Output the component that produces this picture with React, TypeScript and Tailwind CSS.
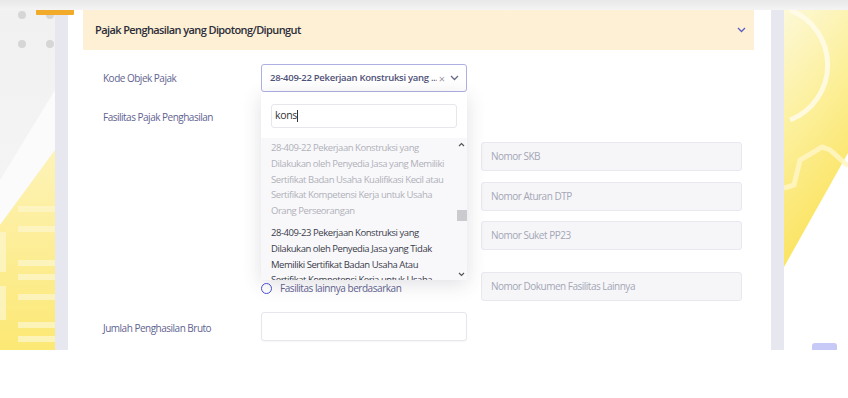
import React from "react";

const font = { fontFamily: '"Open Sans", "Noto Sans", sans-serif' };

function LeftBg() {
  return (
    <div className="w-[55px] shrink-0 h-full">
      <svg width="55" height="340" viewBox="0 0 55 340">
        <defs>
          <linearGradient id="lg1" x1="0" y1="0" x2="0" y2="1">
            <stop offset="0" stopColor="#f1f1f1" />
            <stop offset="1" stopColor="#f7f7f7" />
          </linearGradient>
          <linearGradient id="ly" x1="0" y1="0" x2="0" y2="1">
            <stop offset="0" stopColor="#fdf3b8" />
            <stop offset="1" stopColor="#fce874" />
          </linearGradient>
        </defs>
        <rect width="55" height="340" fill="url(#lg1)" />
        <polygon points="55,80 55,140 0,215 0,170" fill="#fbfbfb" />
        <polygon points="55,140 55,340 0,340 0,215" fill="url(#ly)" />
        <circle cx="22" cy="5" r="4" fill="#d6d6d6" />
        <circle cx="50" cy="5" r="4" fill="#d6d6d6" />
        <circle cx="22" cy="34" r="4" fill="#d6d6d6" />
        <circle cx="50" cy="34" r="4" fill="#d6d6d6" />
        <g fill="#fdf6c8" opacity="0.8">
          <rect x="18" y="196" width="37" height="6" />
          <rect x="18" y="216" width="37" height="6" />
          <rect x="18" y="250" width="37" height="6" />
          <rect x="18" y="264" width="37" height="6" />
          <rect x="18" y="284" width="37" height="6" />
          <rect x="18" y="312" width="37" height="6" />
          <rect x="18" y="326" width="37" height="6" />
          <rect x="0" y="222" width="6" height="40" />
          <rect x="0" y="276" width="6" height="34" />
        </g>
      </svg>
    </div>
  );
}

function RightBg() {
  return (
    <div className="w-[64px] shrink-0 h-full relative">
      <svg width="64" height="340" viewBox="0 0 64 340">
        <defs>
          <linearGradient id="ry" x1="0" y1="0" x2="0.3" y2="1">
            <stop offset="0" stopColor="#fdf8d8" />
            <stop offset="0.45" stopColor="#fcf09c" />
            <stop offset="1" stopColor="#fbe25a" />
          </linearGradient>
        </defs>
        <rect width="64" height="340" fill="#ffffff" />
        <polygon points="0,0 64,0 64,143 0,257" fill="url(#ry)" />
        <path d="M6,0 A59,59 0 0 1 6,110" stroke="#fffbea" strokeWidth="5" fill="none" opacity="0.85" />
        <path d="M0,178 L10,175 L16,150 L38,137 L46,140 L64,156" stroke="#fff6c4" strokeWidth="5" fill="none" opacity="0.85" />
      </svg>
      <div className="absolute left-[28px] top-[333px] w-[25px] h-[12px] rounded-[3px] bg-[#c7c9f7]" />
    </div>
  );
}

function Chevron({ className }: { className?: string }) {
  return (
    <svg width="9" height="6" viewBox="0 0 9 6" className={className}>
      <path d="M1 1 L4.5 4.5 L8 1" stroke="currentColor" strokeWidth="1.3" fill="none" />
    </svg>
  );
}

function Field({ placeholder }: { placeholder: string }) {
  return (
    <div className="h-[29px] rounded-[3px] border border-[#e8e8ee] bg-[#f6f6f9] flex items-center px-[9px] text-[10px] text-[#a4a6b5] tracking-[-0.5px] whitespace-nowrap">
      {placeholder}
    </div>
  );
}

function Dropdown() {
  return (
    <div className="absolute left-0 top-[28px] w-[206px] h-[188px] bg-white shadow-[0_4px_18px_rgba(60,60,90,0.16)] flex flex-col z-10">
      <div className="px-[10px] pt-[12px] pb-[10px]">
        <div className="h-[24px] rounded-[3px] border border-[#e6e6ec] flex items-center justify-start pl-[3px] text-[10.5px] text-[#333] bg-white tracking-[-0.3px]">
          <span>kons</span>
          <span className="inline-block w-px h-[12px] bg-[#333]" />
        </div>
      </div>
      <div className="flex-1 bg-[#f8f8fa] flex overflow-hidden">
        <div className="flex-1 pl-[10px] pr-[4px] pt-[2px] text-[9.5px] leading-[15.8px] tracking-[-0.45px]">
          <div className="text-[#b0b1b9] pb-[3px]">
            28-409-22 Pekerjaan Konstruksi yang Dilakukan oleh Penyedia Jasa yang Memiliki Sertifikat Badan Usaha Kualifikasi Kecil atau Sertifikat Kompetensi Kerja untuk Usaha Orang Perseorangan
          </div>
          <div className="text-[#3b3c4a] pt-[3px]">
            28-409-23 Pekerjaan Konstruksi yang Dilakukan oleh Penyedia Jasa yang Tidak Memiliki Sertifikat Badan Usaha Atau Sertifikat Kompetensi Kerja untuk Usaha
          </div>
        </div>
        <div className="w-[11px] shrink-0 flex flex-col items-center">
          <svg width="7" height="5" viewBox="0 0 7 5" className="mt-[4px]">
            <path d="M1 4 L3.5 1.5 L6 4" stroke="#555" strokeWidth="1.2" fill="none" />
          </svg>
          <div className="mt-[63px] w-[10px] h-[11px] bg-[#cbcbcf]" />
          <div className="flex-1" />
          <svg width="7" height="5" viewBox="0 0 7 5" className="mb-[3px]">
            <path d="M1 1 L3.5 3.5 L6 1" stroke="#555" strokeWidth="1.2" fill="none" />
          </svg>
        </div>
      </div>
    </div>
  );
}

function Radio({ label }: { label: string }) {
  return (
    <div className="flex items-center gap-[8px] text-[10px] text-[#5f6390] tracking-[-0.45px] whitespace-nowrap">
      <span className="w-[11px] h-[11px] rounded-full border-[1.5px] border-[#4a4fd6] shrink-0" />
      {label}
    </div>
  );
}

const labelCls = "w-[178px] shrink-0 pl-[20px] text-[10px] text-[#5f6390] tracking-[-0.5px]";

export default function App() {
  return (
    <div className="w-[848px] h-[398px] bg-white overflow-hidden" style={font}>
      <div className="h-[350px] flex flex-col overflow-hidden">
        <div className="h-[10px] shrink-0 bg-gradient-to-b from-[#e8e8e8] to-[#f4f4f4] relative">
          <div className="absolute left-[36px] top-[10px] w-[38px] h-[5px] bg-[#f2aa2a] rounded-b-[1px] z-20" />
        </div>
        <div className="flex-1 flex min-h-0">
          <LeftBg />
          <div className="w-[13px] shrink-0 bg-[#e7e7ef]" />
          <div className="flex-1 bg-white pl-[15px] pr-[17px]">
            <div className="h-full flex flex-col">
              <div className="h-[40px] shrink-0 bg-[#fdf0d4] flex items-center justify-between pl-[12px] pr-[8px]">
                <span className="text-[11px] font-semibold text-[#2c2d3a] tracking-[-0.6px]">
                  Pajak Penghasilan yang Dipotong/Dipungut
                </span>
                <Chevron className="text-[#5a5dc4]" />
              </div>
              <div className="flex flex-col pt-[14px] pr-[12px]">
                <div className="flex items-center h-[28px]">
                  <div className={labelCls}>Kode Objek Pajak</div>
                  <div className="relative w-[206px]">
                    <div className="h-[28px] rounded-[3px] border border-[#aeb0e4] flex items-center pl-[8px] pr-[7px] bg-white">
                      <span className="flex-1 text-[9.5px] font-semibold text-[#4f5278] tracking-[-0.28px] whitespace-nowrap overflow-hidden">
                        28-409-22 Pekerjaan Konstruksi yang ...
                      </span>
                      <span className="text-[11px] text-[#9a9aa8] ml-[2px] leading-none">×</span>
                      <Chevron className="text-[#666a86] ml-[5px]" />
                    </div>
                    <Dropdown />
                  </div>
                </div>
                <div className="flex items-center h-[24px] mt-[13px]">
                  <div className={labelCls}>Fasilitas Pajak Penghasilan</div>
                  <Radio label="Tanpa Fasilitas" />
                </div>
                <div className="flex items-center mt-[13px]">
                  <div className="w-[178px] shrink-0" />
                  <div className="w-[206px] shrink-0"><Radio label="SKB PP 23" /></div>
                  <div className="flex-1 ml-[14px]"><Field placeholder="Nomor SKB" /></div>
                </div>
                <div className="flex items-center mt-[11px]">
                  <div className="w-[178px] shrink-0" />
                  <div className="w-[206px] shrink-0"><Radio label="DTP" /></div>
                  <div className="flex-1 ml-[14px]"><Field placeholder="Nomor Aturan DTP" /></div>
                </div>
                <div className="flex items-center mt-[10px]">
                  <div className="w-[178px] shrink-0" />
                  <div className="w-[206px] shrink-0"><Radio label="Suket PP 23" /></div>
                  <div className="flex-1 ml-[14px]"><Field placeholder="Nomor Suket PP23" /></div>
                </div>
                <div className="flex items-center mt-[22px]">
                  <div className="w-[178px] shrink-0" />
                  <div className="w-[206px] shrink-0 pt-[3px]"><Radio label="Fasilitas lainnya berdasarkan" /></div>
                  <div className="flex-1 ml-[14px]"><Field placeholder="Nomor Dokumen Fasilitas Lainnya" /></div>
                </div>
                <div className="flex items-center mt-[11px]">
                  <div className={labelCls + " pt-[3px]"}>Jumlah Penghasilan Bruto</div>
                  <div className="w-[206px] h-[29px] rounded-[3px] border border-[#e6e6ec] bg-white shadow-[0_1px_2px_rgba(0,0,0,0.04)]" />
                </div>
              </div>
            </div>
          </div>
          <div className="w-[13px] shrink-0 bg-[#e7e7ef]" />
          <RightBg />
        </div>
      </div>
    </div>
  );
}
